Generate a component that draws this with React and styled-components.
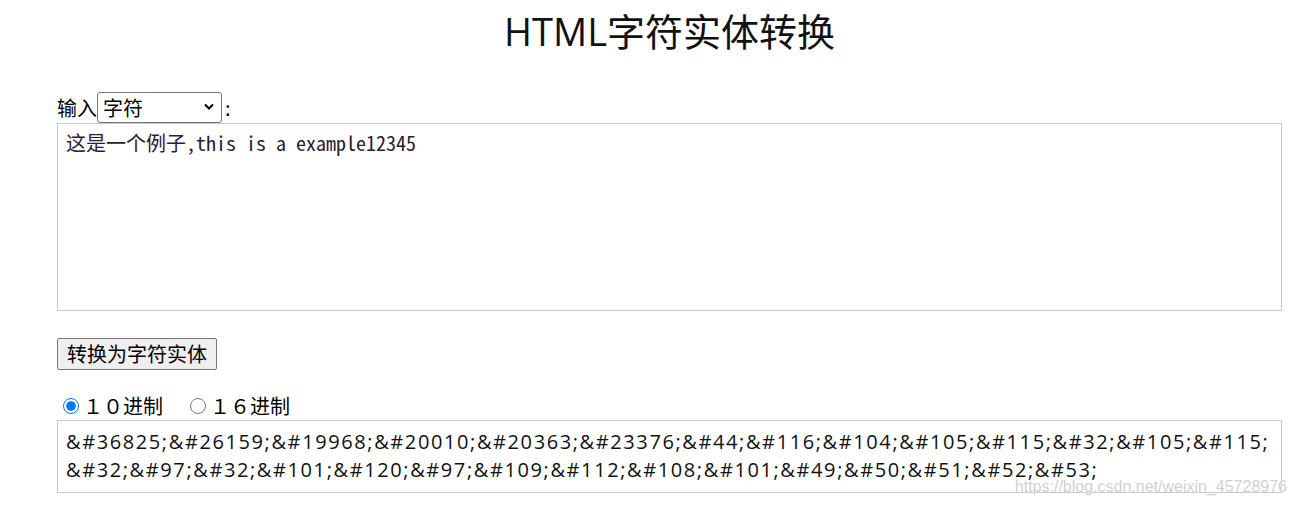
import React, { useState } from "react";
import styled, { createGlobalStyle } from "styled-components";

const Global = createGlobalStyle`
  html, body { margin: 0; padding: 0; background: #fff; }
  body {
    font-family: "Open Sans", "Noto Sans CJK SC", sans-serif;
    color: #000;
  }
  * { box-sizing: border-box; }
`;

const Page = styled.div`
  position: relative;
  width: 1297px;
  height: 508px;
  padding: 0 15px 0 57px;
  overflow: hidden;
`;

const Title = styled.h1`
  margin: 5px 0 0;
  font-size: 38px;
  line-height: 52px;
  font-weight: 400;
  text-align: center;
  color: #111;
  font-family: "Open Sans", "Noto Sans CJK SC", sans-serif;
`;

const InputRow = styled.div`
  margin-top: 35px;
  display: flex;
  align-items: center;
  height: 31px;
  font-size: 20px;
  font-family: "Noto Sans CJK SC", sans-serif;
`;

const SelectWrap = styled.div`
  position: relative;
  display: inline-flex;
`;

const Select = styled.select`
  appearance: none;
  width: 125px;
  height: 31px;
  border: 1px solid #767676;
  border-radius: 3px;
  background: #fff;
  padding: 0 24px 0 5px;
  font-size: 20px;
  font-family: "Noto Sans CJK SC", sans-serif;
  color: #000;
  outline: none;
`;

const Chevron = styled.svg`
  position: absolute;
  right: 8px;
  top: 11px;
  width: 10px;
  height: 8px;
  pointer-events: none;
`;

const Colon = styled.span`
  margin-left: 3px;
`;

const Area = styled.textarea`
  display: block;
  width: 100%;
  height: 188px;
  margin: 0;
  border: 1px solid #c8c8c8;
  padding: 6px 8px;
  resize: none;
  font-size: 20px;
  line-height: 26px;
  font-family: "Noto Sans Mono CJK SC", "Liberation Mono", monospace;
  color: #2a2030;
  outline: none;
`;

const Button = styled.button`
  display: block;
  margin-top: 27px;
  height: 32px;
  padding: 0 9px;
  border: 1px solid #767676;
  border-radius: 2px;
  background: #efefef;
  font-size: 20px;
  line-height: 28px;
  font-family: "Noto Sans CJK SC", sans-serif;
  color: #000;
`;

const RadioRow = styled.div`
  margin-top: 21px;
  height: 29px;
  display: flex;
  align-items: center;
  gap: 21px;
  font-size: 20px;
  font-family: "Noto Sans CJK SC", sans-serif;
`;

const RadioLabel = styled.label`
  display: inline-flex;
  align-items: center;
`;

const Radio = styled.input`
  width: 16px;
  height: 16px;
  margin: 0 4px 0 6px;
  accent-color: #0075ff;
`;

const Output = styled.div`
  border: 1px solid #c8c8c8;
  height: 73px;
  padding: 7px 4px 7px 8px;
  font-size: 20px;
  line-height: 28px;
  letter-spacing: 1.6px;
  font-family: "Open Sans", "Noto Sans CJK SC", sans-serif;
  color: #111;
`;

const Watermark = styled.div`
  position: absolute;
  right: 10px;
  top: 478px;
  font-family: "Liberation Sans", Arial, sans-serif;
  font-size: 16px;
  color: rgba(200, 200, 200, 0.85);
  text-shadow: 0 0 1px #fff, 0 0 1px #fff;
  pointer-events: none;
`;

const sample = "这是一个例子,this is a example12345";

export default function App() {
  const [mode, setMode] = useState("10");
  const entities = Array.from(sample)
    .map((c) => "&#" + c.codePointAt(0) + ";")
    .join("\u200b");
  return (
    <>
      <Global />
      <Page>
        <Title>HTML字符实体转换</Title>
        <InputRow>
          输入
          <SelectWrap>
            <Select defaultValue="char">
              <option value="char">字符</option>
              <option value="entity">字符实体</option>
            </Select>
            <Chevron viewBox="0 0 10 8">
              <path d="M1 1.5 L5 5.5 L9 1.5" fill="none" stroke="#000" strokeWidth="2" />
            </Chevron>
          </SelectWrap>
          <Colon>:</Colon>
        </InputRow>
        <Area readOnly value={sample} />
        <Button>转换为字符实体</Button>
        <RadioRow>
          <RadioLabel>
            <Radio type="radio" name="base" checked={mode === "10"} onChange={() => setMode("10")} />
            １０进制
          </RadioLabel>
          <RadioLabel>
            <Radio type="radio" name="base" checked={mode === "16"} onChange={() => setMode("16")} />
            １６进制
          </RadioLabel>
        </RadioRow>
        <Output>{entities}</Output>
        <Watermark>https://blog.csdn.net/weixin_45728976</Watermark>
      </Page>
    </>
  );
}
